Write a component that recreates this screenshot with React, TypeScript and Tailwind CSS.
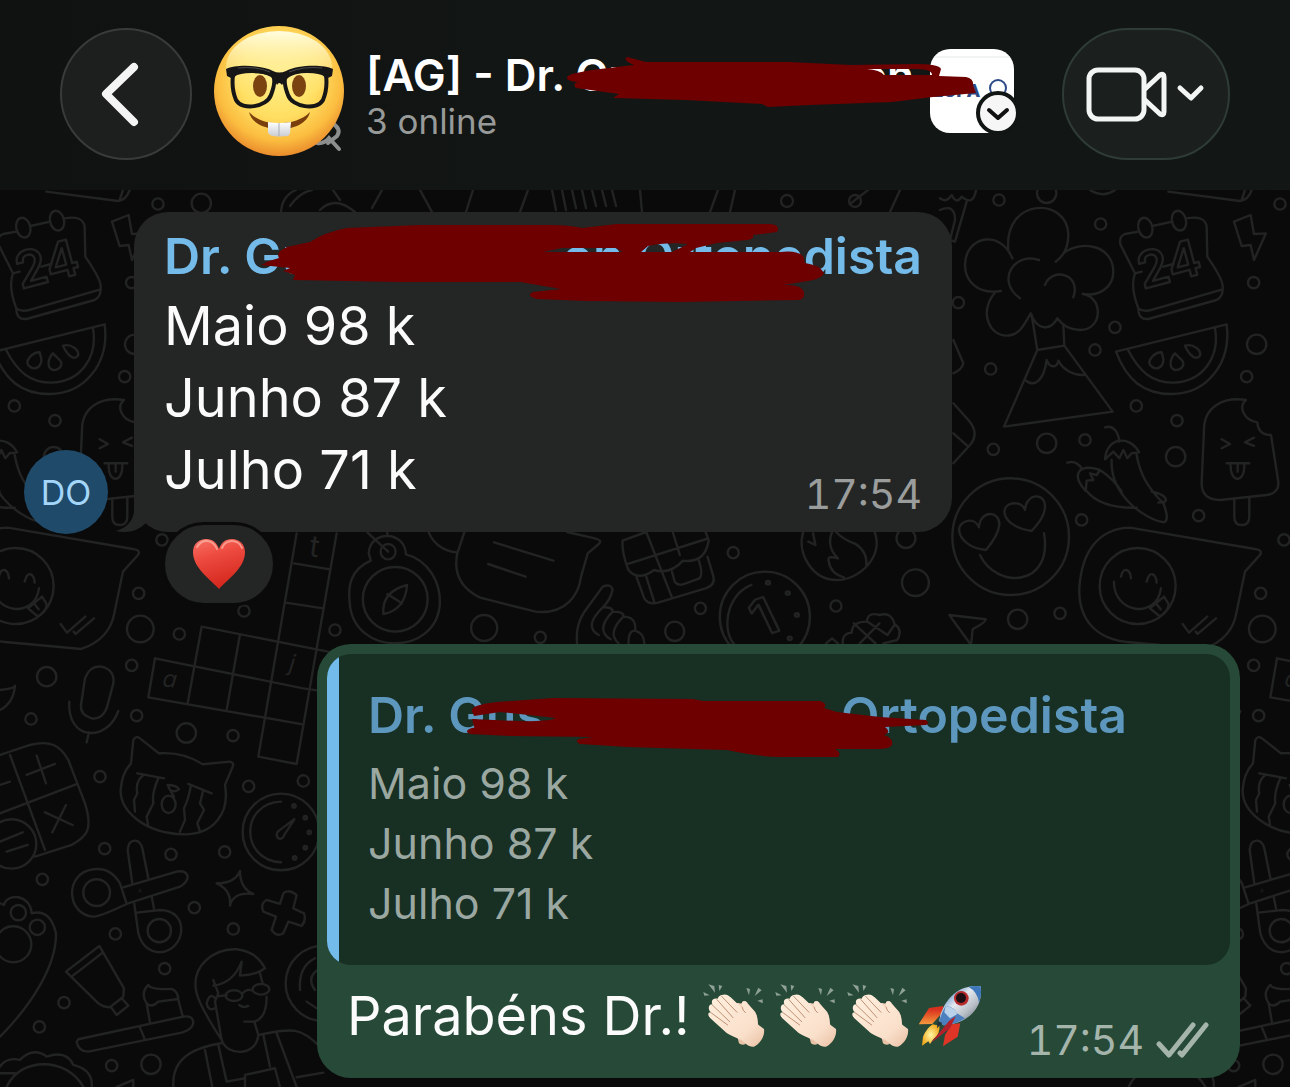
import React from 'react'

const MONTHS = ['Maio 98 k', 'Junho 87 k', 'Julho 71 k']

const Dots = ({ points, r }: { points: number[][]; r: number }) => (
  <>
    {points.map(([x, y]) => (
      <circle key={`${x}-${y}`} cx={x} cy={y} r={r} />
    ))}
  </>
)

// One horizontal tile of the doodle wallpaper, 1122px wide
const DoodleTile = () => (
  <g id="doodles">
    <g transform="translate(940 190) scale(0.3333)">
      <path d="M183 303C110 315 75 270 75 225C75 140 180 115 217 205M205 180C190 20 385 20 385 135C385 170 375 195 347 215M370 190C430 145 520 170 520 245C520 290 480 320 428 312C490 320 490 420 420 420C390 420 370 410 352 385C330 425 290 420 272 370C250 410 235 437 200 437C150 437 115 370 165 307M297 210C225 185 165 270 240 325M315 285C335 230 425 250 400 322" />
      <path d="M275 375L292 480L192 710L518 665L373 467L370 405M292 480L373 467M255 570C285 595 312 570 320 510C330 535 350 535 355 512C370 540 400 557 432 555" />
      <path d="M595 125L555 132Q535 140 542 165L585 250Q570 290 595 355Q595 390 625 387L830 330Q850 320 848 290Q850 270 802 200L800 110Q795 75 740 85M637 108L697 95M585 250L605 245M670 230L700 222M595 355Q610 368 640 358L848 298" />
      <ellipse cx="616" cy="113" rx="21" ry="30" transform="rotate(-14 616 113)" />
      <ellipse cx="717" cy="92" rx="21" ry="30" transform="rotate(-14 717 92)" />
      <text x="608" y="298" fontSize="150" fontWeight="600" transform="rotate(-15 608 298)">24</text>
      <path d="M528 485L860 403C875 520 800 612 695 612C610 612 560 570 528 485ZM563 478C600 550 640 578 700 578C790 575 840 500 825 415" />
      <path d="M665 487C640 487 620 515 632 527C650 545 672 530 670 505ZM705 490C690 505 685 535 705 540C730 540 735 520 725 510ZM735 467C760 460 785 480 780 497C770 512 750 500 735 467Z" />
      <path d="M882 95L932 75L942 132L978 130L942 210L932 165L905 168Z" />
      <path d="M918 630C850 620 792 650 792 720L785 880Q785 930 840 930L980 915Q1018 910 1015 875L993 735Q955 735 952 697C910 690 895 650 918 630M883 925V980Q883 1005 905 1005Q928 1005 928 980V922M845 748L870 762L845 775M942 743L915 757L942 768M860 820H928M872 825C870 880 915 880 913 825M893 825V845" />
      <path d="M495 712C520 705 535 725 538 755M495 808C500 740 570 735 597 787L575 790L562 805L550 780L538 805L520 785ZM515 810C510 920 620 990 672 997Q690 990 670 940C620 890 600 850 590 795M635 905C665 910 685 925 675 935L655 938M382 818C400 812 415 820 425 835M437 903C390 850 420 820 480 840L470 855L450 850L460 870L440 872ZM440 903C470 940 520 955 590 953M480 840C510 860 530 880 545 905" />
      <circle cx="212" cy="1040" r="175" />
      <path d="M138 1080C90 1075 60 1050 57 1020C57 990 105 980 117 1012C120 960 180 960 178 1005C175 1035 155 1060 138 1080ZM275 1023C220 1015 195 990 193 965C195 935 245 930 255 960C258 910 315 905 315 950C315 980 290 1005 275 1023ZM120 1095C170 1200 340 1190 312 1030" />
      <path d="M570 1013L945 1077Q970 1080 960 1095L915 1145L890 1265C880 1330 840 1360 790 1377L570 1357C470 1350 415 1290 418 1195C425 1080 480 1015 570 1013Z" />
      <circle cx="593" cy="1188" r="114" />
      <path d="M543 1160C550 1130 570 1135 573 1165M620 1175C628 1140 648 1150 650 1178M522 1175C520 1270 650 1290 663 1195M630 1255L672 1220L685 1240Q690 1260 660 1280ZM648 1240L662 1258M728 1302L747 1328L802 1280M767 1325L773 1332L828 1285" />
      <path d="M28 1275L137 1288Q140 1295 98 1318L93 1365Z" />
      <path d="M40 450L70 520Q65 540 40 550M40 640L85 690Q120 730 90 765L40 820M40 730L85 770M0 60Q45 40 45 90L30 150L45 155L80 35M0 25Q20 40 35 15Q50 45 65 20Q100 50 108 0" />
      <path d="M685 5L900 33Q925 30 935 0M905 30L915 0M450 0Q490 25 525 0" />
      <Dots r={17} points={[[177, 30], [482, 102], [55, 338], [525, 412], [465, 480], [152, 537], [589, 648], [711, 692], [435, 750], [160, 778], [425, 990], [776, 977], [360, 1270], [941, 278], [920, 560], [1020, 42], [1032, 1050], [962, 1210]]} />
      <Dots r={29} points={[[320, 10], [950, 463], [320, 760], [707, 800], [233, 1288], [1150, 40], [1133, 463]]} />
      <circle cx="967" cy="1317" r="40" />
    </g>
    <g transform="translate(0 600) scale(0.3333)">
      <path d="M255 235Q270 195 305 200Q345 210 340 250L320 325Q305 360 275 355Q240 345 243 315ZM208 305C200 420 320 430 355 333M267 397L260 427" />
      <path d="M605 80L950 148L1010 160M465 175L910 265L1010 280M445 292L908 373M605 80L563 310M465 175L445 292M720 103L680 330M890 -200L775 470L890 492L1010 -200M882 -110L990 -92M857 8L970 25" />
      <g fill="#222323" stroke="none">
        <text x="485" y="258" fontSize="70" fontStyle="italic" transform="rotate(8 485 258)">a</text>
        <text x="865" y="212" fontSize="70" fontStyle="italic" transform="rotate(8 865 212)">j</text>
        <text x="925" y="-132" fontSize="90" transform="rotate(8 925 -132)">t</text>
      </g>
      <path d="M400 420Q408 405 420 415L477 460Q550 455 608 493L690 485Q703 488 698 500L675 555C690 640 640 705 550 703C430 700 360 630 362 570Q365 520 393 490ZM412 520L492 535M565 552L635 580M430 525Q405 545 412 580L402 600L405 635M475 535Q455 580 460 610L440 650L445 680M572 560Q565 600 552 625L555 660L540 695M610 570L600 610L612 630L592 670L600 695M503 555Q530 555 537 568Q525 578 510 570ZM513 575L522 590" />
      <ellipse cx="506" cy="613" rx="21" ry="26" />
      <circle cx="843" cy="696" r="115" />
      <path d="M843 605C720 610 720 780 843 787M883 658L833 695Q825 712 840 717Q850 715 853 705Z" />
      <path d="M0 465L90 435C150 420 180 435 205 480L255 610C280 690 260 710 215 735L105 770M30 465L135 750M0 640L228 553M80 525L165 492M110 467L138 550M135 637L218 675M198 615L157 697M0 555L30 545M0 725L68 697M20 755L83 735" />
      <circle cx="35" cy="732" r="74" />
      <path d="M383 750Q385 722 405 722Q425 722 430 760L445 835M383 750L397 850M367 863L530 815Q560 810 563 830Q562 848 540 860L380 912Q300 950 280 950C200 945 190 820 280 808Q330 800 360 850L380 912M403 912L415 1000Q430 1055 480 1057C560 1050 570 930 480 930L410 938M455 890L462 925" />
      <circle cx="290" cy="878" r="40" />
      <circle cx="478" cy="992" r="35" />
      <path d="M650 850Q705 850 720 813Q720 865 760 882Q700 875 690 917Q695 870 650 850ZM790 935Q780 910 800 900L840 912L850 880Q865 865 890 885L880 925L912 940Q920 960 905 978L865 965L850 1000Q830 1012 815 990L828 950Z" />
      <path d="M198 1115L298 1038L372 1165L370 1190L330 1222Q310 1222 295 1210ZM215 1130L308 1058M332 1220L365 1195L385 1217L350 1245Z" />
      <path d="M235 1318L550 1250Q580 1245 580 1270Q575 1290 545 1298L265 1355Q235 1355 230 1325ZM420 1283L433 1315M450 1268L440 1210Q420 1180 445 1155Q450 1170 515 1167Q535 1175 535 1200L548 1248M440 1210Q455 1225 475 1205L535 1197" />
      <path d="M640 1140L655 1180L645 1205L665 1320C680 1370 770 1370 775 1305L763 1265Q800 1255 800 1190M665 1320Q600 1220 590 1180C570 1100 640 1045 710 1048Q770 1055 795 1105Q770 1125 720 1127L725 1085Q700 1150 640 1157M780 1120L788 1150M650 1190L680 1185M620 1210Q630 1175 645 1195M620 1210Q625 1235 645 1225M718 1215Q730 1225 745 1218M733 1265L763 1265" />
      <ellipse cx="702" cy="1187" rx="25" ry="16" />
      <ellipse cx="783" cy="1168" rx="25" ry="16" />
      <path d="M728 1180Q740 1165 758 1172M520 1461C515 1380 570 1345 665 1330M775 1305C880 1285 900 1280 960 1340M615 1350L637 1461M655 1335L680 1445L735 1435M790 1305L810 1400M830 1300L890 1461M735 1461L735 1425L825 1405L840 1461M890 1432L970 1418M350 1461L400 1440V1461" />
      <circle cx="970" cy="1150" r="113" />
      <path d="M900 1170Q895 1100 945 1075M950 1112Q920 1135 945 1170M920 1205L950 1225" />
      <path d="M0 1310C90 1220 170 1100 168 1000Q150 925 95 940C90 880 20 880 12 915L0 910" />
      <circle cx="40" cy="1033" r="54" />
      <path d="M0 1400Q20 1370 60 1380Q100 1340 140 1370Q200 1350 220 1395Q280 1410 275 1461M20 1461C60 1370 200 1370 250 1461M0 1420L45 1420M0 270Q45 265 45 257Q40 310 0 330" />
      <Dots r={17} points={[[732, 33], [538, 102], [395, 196], [93, 357], [410, 347], [699, 407], [300, 530], [746, 559], [910, 543], [314, 746], [513, 763], [674, 756], [127, 838], [583, 923], [346, 1002], [700, 987], [494, 1106], [192, 1208], [118, 1281], [335, 1397], [1005, 90]]} />
      <Dots r={29} points={[[140, 230], [559, 399], [453, 1393]]} />
      <Dots r={23} points={[[55, 938], [112, 982]]} />
      <Dots r={5} points={[[882, 618], [916, 653], [928, 697], [916, 743], [884, 774]]} />
      <circle cx="420" cy="872" r="1" />
    </g>
    {/* strip between the two bubbles */}
    <g transform="translate(330 520) scale(0.3953 0.3333)">
      <ellipse cx="165" cy="238" rx="82" ry="97" />
      <ellipse cx="147" cy="95" rx="19" ry="23" />
      <path d="M103 122C50 150 45 200 50 250C60 410 270 410 278 250C280 190 250 120 192 103C190 30 100 30 98 100ZM195 195Q130 215 135 282Q190 270 195 195ZM145 222L182 250M95 38L147 95M145 36V48" />
      <path d="M340 36L322 100C310 170 340 210 380 233L520 275C600 285 630 220 635 170L652 100L680 72Q690 60 670 55L600 36M415 67L565 122M400 132L495 170M250 38Q270 90 320 97" />
      <path d="M625 370Q620 310 650 265L690 200Q710 190 715 208Q710 240 690 262M690 262Q715 260 715 275M690 262Q640 320 680 345M715 275Q670 330 710 358M715 275Q745 275 742 290M742 290Q700 340 730 370M742 290Q775 290 772 330M755 370Q755 330 772 332Q795 340 795 370" />
      <path d="M800 36L740 62Q738 100 755 150Q780 185 820 150Q860 165 893 122Q950 130 958 60L950 36M750 133L952 57M800 36L865 232M867 36L885 105M775 170L795 235Q805 255 830 248L950 205Q975 195 970 170L955 110M865 155L872 185Q880 200 900 190L935 175Q945 160 932 118M800 170L820 245" />
      <ellipse cx="1100" cy="290" rx="114" ry="135" />
      <path d="M1066 195C990 230 990 370 1040 385" />
      <text x="1088" y="352" fontSize="150" fontWeight="600" transform="rotate(-22 1088 352)">1</text>
      <path d="M1197 36C1180 100 1220 180 1282 180C1340 180 1400 110 1378 36M1210 65L1228 75L1222 40M1270 36Q1255 80 1285 115Q1255 105 1262 125Q1265 160 1300 172M1280 36Q1300 60 1330 72Q1360 95 1357 138" />
      <path d="M1297 370Q1295 340 1320 338Q1320 305 1358 305Q1360 275 1390 285Q1420 275 1428 312Q1450 330 1435 360L1400 370M1325 310L1380 370M1360 305L1410 345L1428 315M1340 370L1390 310M1255 370L1270 355L1285 370" />
      <ellipse cx="390" cy="324" rx="33" ry="39" />
      <ellipse cx="872" cy="334" rx="24" ry="29" />
      <ellipse cx="1481" cy="188" rx="34" ry="40" />
      <ellipse cx="1457" cy="55" rx="24" ry="29" />
      <ellipse cx="1020" cy="98" rx="14" ry="17" />
      <ellipse cx="937" cy="265" rx="14" ry="17" />
      <ellipse cx="1280" cy="258" rx="14" ry="17" />
      <ellipse cx="532" cy="352" rx="14" ry="17" />
      <Dots r={5} points={[[1108, 188], [1158, 219], [1181, 285], [1163, 355]]} />
    </g>
    {/* strip above the first bubble */}
    <path d="M281 212Q282 196 296 190M290 206Q300 192 312 190M320 210Q335 195 355 212M333 190L340 200M382 190L372 208M420 190L432 212M466 212L473 190M520 212L528 190M552 190L556 210M562 190L566 210M572 190L576 208M582 190L586 208M592 190L596 206M602 190L606 206M612 190L616 206M640 190L642 212M710 212L718 190M730 212L735 190M850 204L868 190M890 212L900 190" />
    <Dots r={6} points={[[787, 201], [855, 201]]} />
  </g>
)

const Wallpaper = () => (
  <svg
    aria-hidden="true"
    className="pointer-events-none absolute inset-0 h-full w-full overflow-hidden font-['Inter',sans-serif] [&_*]:[vector-effect:non-scaling-stroke]"
    fill="none"
    stroke="#222323"
    strokeWidth="2.4"
    strokeLinecap="round"
    strokeLinejoin="round"
  >
    <g transform="translate(0 -190)">
      <DoodleTile />
      <use href="#doodles" x="-1122" />
      <use href="#doodles" x="1122" />
    </g>
  </svg>
)

const NerdFace = () => (
  <svg viewBox="0 0 132 138" className="h-[138px] w-[132px] shrink-0" role="img" aria-label="Group photo">
    <defs>
      <radialGradient id="face" cx="0.5" cy="0.4" r="0.6">
        <stop offset="0" stopColor="#ffee8a" />
        <stop offset="0.5" stopColor="#ffdf62" />
        <stop offset="0.8" stopColor="#fbbd40" />
        <stop offset="1" stopColor="#ea8c2c" />
      </radialGradient>
      <linearGradient id="shine" x1="0" y1="0" x2="0" y2="1">
        <stop offset="0" stopColor="#fffde0" />
        <stop offset="1" stopColor="#ffe873" stopOpacity="0" />
      </linearGradient>
      <linearGradient id="teeth" x1="0" y1="0" x2="0" y2="1">
        <stop offset="0" stopColor="#ffffff" />
        <stop offset="1" stopColor="#c9ccd2" />
      </linearGradient>
    </defs>
    <path d="M118 98Q128 104 123 111L114 118M103 118Q110 119 115 113L125 124" fill="none" stroke="#8d8e8e" strokeWidth="4" strokeLinecap="round" />
    <circle cx="65" cy="66" r="65" fill="url(#face)" />
    <ellipse cx="65" cy="42" rx="53" ry="36" fill="url(#shine)" />
    <ellipse cx="46" cy="61" rx="7" ry="11" fill="#7b4310" />
    <ellipse cx="85" cy="61" rx="7" ry="11" fill="#7b4310" />
    <path d="M35 87C48 102 82 102 96 87C91 110 40 110 35 87Z" fill="#7a3f0c" />
    <path d="M54 97Q65 99 77 97L76 108Q75 112 70 111Q65 112 60 111Q55 111 54 107Z" fill="url(#teeth)" />
    <path d="M65 98V111" stroke="#a9adb5" strokeWidth="1" />
    <path d="M19 50C28 44 50 46 57 49C62 52 60 62 57 70C53 82 28 86 22 75C19 68 18 58 19 50ZM112 50C103 44 81 46 74 49C69 52 71 62 74 70C78 82 103 86 109 75C112 68 113 58 112 50Z" fill="none" stroke="#161616" strokeWidth="4" />
    <path d="M12 44C22 39 48 40 59 46Q65 49 72 46C83 40 109 39 119 44L118 51L112 54L108 49C96 46 80 48 74 53Q70 56 68 60Q65 56 63 60Q60 54 57 52C48 47 33 46 23 49L19 54L13 51Z" fill="#161616" />
    <path d="M24 43Q42 41 56 47M75 47Q90 41 108 43" fill="none" stroke="#4b4b4b" strokeWidth="1" />
  </svg>
)

const Clap = () => (
  <svg viewBox="24 15 216 216" className="size-[72px] shrink-0" role="img" aria-label="clap">
    <defs>
      <linearGradient id="skin" x1="0" y1="0" x2="1" y2="1">
        <stop offset="0" stopColor="#fff0df" />
        <stop offset="0.7" stopColor="#fae0cb" />
        <stop offset="1" stopColor="#e9bfa3" />
      </linearGradient>
    </defs>
    <path d="M40 28L58 33L60 53ZM71 30L82 33L73 48ZM25 51L44 61L28 62ZM154 39L165 42L162 61ZM190 38L200 46L179 63ZM187 77L203 73V85Z" fill="#8fa097" />
    <path d="M125 178L132 205Q140 212 152 207L150 185Z" fill="#e8c3a8" />
    <path d="M120 85C135 80 138 92 142 80C148 76 155 78 159 86L180 110C188 122 188 140 190 153L150 140Z" fill="#f3d5bd" />
    <path
      d="M80 60C92 56 99 60 107 67L137 95L142 97C137 84 143 76 153 80C162 95 181 105 186 125L188 148L207 162C210 180 198 205 177 215C160 217 152 205 140 195C125 190 108 182 95 174L46 130C37 120 38 112 48 112C39 106 38 88 52 88C47 76 55 68 68 71C70 65 74 61 80 60Z"
      fill="url(#skin)"
    />
    <path d="M80 64L126 112M66 74L114 128M52 90L104 140M48 113L98 150M141 96Q143 107 151 113" fill="none" stroke="#bd9174" strokeWidth="3" strokeLinecap="round" />
  </svg>
)

const Rocket = () => (
  <svg viewBox="672 15 216 216" className="size-[72px] shrink-0" role="img" aria-label="rocket">
    <defs>
      <linearGradient id="hull" x1="0" y1="0" x2="1" y2="1">
        <stop offset="0.15" stopColor="#4e86c4" />
        <stop offset="0.42" stopColor="#e3e9ef" />
        <stop offset="0.65" stopColor="#b9bfc6" />
        <stop offset="1" stopColor="#4a5562" />
      </linearGradient>
      <linearGradient id="fin" x1="0" y1="0" x2="0" y2="1">
        <stop offset="0.2" stopColor="#d8321f" />
        <stop offset="1" stopColor="#f79a3b" />
      </linearGradient>
      <radialGradient id="flame">
        <stop offset="0" stopColor="#fff8a8" />
        <stop offset="1" stopColor="#f2ad22" />
      </radialGradient>
    </defs>
    <path d="M745 93L702 99L671 148L712 147L740 115Z" fill="url(#fin)" />
    <path d="M796 145L788 185L744 214L750 180L770 148Z" fill="#df3527" />
    <path d="M713 148L733 152Q737 175 715 193L705 207L700 199L681 212L684 185Q695 160 713 148Z" fill="url(#flame)" />
    <path d="M733 138C738 95 770 50 810 38Q835 30 857 34Q862 70 845 98C825 130 790 148 745 151Z" fill="url(#hull)" />
    <path d="M820 35Q840 31 857 34Q861 60 852 83Q848 50 820 35Z" fill="#3e78bb" />
    <path d="M733 138Q738 115 752 93Q778 95 786 115L810 130Q780 150 745 151Z" fill="#4c7fbe" />
    <path d="M752 93Q778 96 787 117L765 130L748 112Z" fill="#b9d2ea" />
    <circle cx="799" cy="70" r="22" fill="#b52b2b" />
    <circle cx="798" cy="69" r="15" fill="#1d0f14" />
    <path d="M782 124L762 138L708 203L765 160Z" fill="#b3202a" />
    <path d="M728 140L742 143L726 160Z" fill="#22303d" />
  </svg>
)

const Heart = () => (
  <svg viewBox="0 0 52 52" className="size-[52px]" role="img" aria-label="heart">
    <defs>
      <linearGradient id="heart" x1="0" y1="0" x2="0.3" y2="1">
        <stop offset="0" stopColor="#f77367" />
        <stop offset="0.4" stopColor="#ee4b40" />
        <stop offset="1" stopColor="#d5291f" />
      </linearGradient>
    </defs>
    <path d="M26 51C17 41 0 30 0 14C0 6 6 1 13 1C20 1 24 5 26 11C28 5 32 1 39 1C46 1 52 6 52 14C52 30 35 41 26 51Z" fill="url(#heart)" />
    <path d="M4 9Q8 2 15 3Q21 4 24 11M29 10Q32 3 39 3Q46 3 49 10" fill="none" stroke="#ffc4b8" strokeWidth="2" strokeLinecap="round" opacity="0.6" />
  </svg>
)

const Header = () => (
  <header className="relative z-10 flex min-h-[190px] items-center bg-linear-to-r from-[#101111] via-[#121715] to-[#121615] px-[60px] pb-0.5">
    <button aria-label="Back" className="flex size-[132px] shrink-0 items-center justify-center rounded-full border-2 border-[#393a3a] bg-[#1d1e1e]">
      <svg viewBox="0 0 132 132" className="size-[132px] shrink-0" fill="none" stroke="#f4f4f4" strokeWidth="8" strokeLinecap="round" strokeLinejoin="round">
        <path d="M74 39L46 66L74 94" />
      </svg>
    </button>
    <div className="ml-[22px]">
      <NerdFace />
    </div>
    <div className="relative ml-5 flex-1 pt-1">
      <h1 className="flex justify-between pr-4 text-[44px] leading-[50px] font-semibold whitespace-nowrap text-white">
        <span>[AG] - Dr. Gu</span>
        <span>on</span>
      </h1>
      <p className="text-[35px] leading-[42px] text-[#979a99]">3 online</p>
      <svg aria-hidden="true" viewBox="366 50 564 50" className="absolute top-1 right-0 z-10 h-[50px] w-[564px] overflow-visible">
        <path
          fill="#6e0000"
          d="M567 78Q566 74 592 70L625 66L634 65Q622 60 627 57L646 62L727 62L789 62L851 65L916 64Q939 64 941 69L939 76L966 77Q974 79 973 85L976 93L933 97L892 102L810 105L768 107L762 104L686 100L613 98L619 94L576 88Q572 83 578 82Q567 81 567 78ZM867 69Q880 70 884 75L932 75Q932 69 916 69Z"
          fillRule="evenodd"
        />
      </svg>
    </div>
    <div className="relative mb-1.5 size-[84px] shrink-0 rounded-[20px] bg-white">
      <svg aria-hidden="true" viewBox="0 0 84 84" className="size-[84px]" fill="none">
        <path d="M4 8H80" stroke="#e3e9e7" strokeWidth="1" />
        <circle cx="68" cy="39" r="8" stroke="#2b4a86" strokeWidth="2" />
        <text x="3" y="48" fontSize="18" fontWeight="800" fill="#2b4a86">LUPA</text>
      </svg>
      <span className="absolute -right-1.5 -bottom-0.5 flex size-[44px] items-center justify-center rounded-full border-4 border-[#111514] bg-[#f6f6f6]">
        <svg aria-hidden="true" viewBox="0 0 36 36" className="size-9 shrink-0" fill="none" stroke="#111" strokeWidth="4" strokeLinecap="round" strokeLinejoin="round">
          <path d="M9 15L18 23L27 15" />
        </svg>
      </span>
    </div>
    <button aria-label="Video call" className="ml-12 flex h-[132px] w-[168px] shrink-0 items-center justify-center rounded-full border-2 border-[#2f3b37] bg-[#1b201f]">
      <svg viewBox="0 0 168 132" className="h-[132px] w-[168px] shrink-0" fill="none" stroke="#f2f5f3" strokeWidth="5" strokeLinecap="round" strokeLinejoin="round">
        <rect x="27" y="42" width="55" height="49" rx="9" />
        <path d="M83 61L98 47Q102 45 102 49V84Q102 88 98 86L83 72" />
        <path d="M118 60L129 70L139 60" />
      </svg>
    </button>
  </header>
)

const ReceivedMessage = () => (
  <article className="flex items-end pt-[22px] pl-6">
    <div className="-mb-0.5 flex size-[84px] shrink-0 items-center justify-center rounded-full bg-[#204a69] text-[34px] text-[#a4d6fa]">DO</div>
    <div className="relative ml-[26px] rounded-[34px] bg-[#232625] px-[30px] pt-3.5 pb-3.5">
      <svg aria-hidden="true" viewBox="0 0 40 40" className="absolute bottom-0 -left-[18px] size-10" fill="#232625">
        <path d="M18 0V20Q16 34 0 39Q18 43 30 31L40 20Z" />
      </svg>
      <h2 className="relative mb-1 flex w-[758px] justify-between text-[50px] leading-[60px] font-semibold whitespace-nowrap text-[#74bbea]">
        <span>Dr. Gu</span>
        <span>on Ortopedista</span>
        <svg aria-hidden="true" viewBox="164 226 758 60" className="absolute top-0 left-0 h-[60px] w-[758px] overflow-visible">
          <path
            fill="#6e0000"
            fillRule="evenodd"
            d="M261 265Q270 260 279 258Q275 252 287 247L310 242Q325 232 347 228L420 225H550Q570 225 582 228L617 224H770Q781 225 777 232L753 235Q755 239 747 240L717 243L696 248L690 252H780Q797 250 803 256L805 263Q820 265 824 273Q822 279 808 281L783 285Q803 284 804 293Q805 300 797 300L680 302L587 301L537 299Q525 296 533 292L561 289L520 282H400L293 280L295 275L283 271L290 268ZM543 252L562 248H616L623 252ZM641 252L648 246Q665 242 688 244L672 252Z"
          />
        </svg>
      </h2>
      <div className="flex items-end justify-between">
        <div className="pb-3 text-[54px] leading-[72px] text-[#fbfbfb]">
          {MONTHS.map((line) => (
            <p key={line}>{line}</p>
          ))}
        </div>
        <time className="text-[41px] leading-[48px] text-[#9b9d9c] tabular-nums">17:54</time>
      </div>
    </div>
  </article>
)

const SentMessage = () => (
  <article className="mt-[38px] mr-[50px] ml-auto w-[923px] rounded-[34px] bg-[#274a38] px-2.5 pt-2.5 pb-3.5">
    <blockquote className="flex overflow-hidden rounded-3xl bg-[#182f24]">
      <div className="w-3 shrink-0 bg-[#73bbea]" />
      <div className="pt-[31px] pb-8 pl-[29px]">
        <h2 className="relative mb-2 flex w-[759px] justify-between text-[50px] leading-[60px] font-semibold whitespace-nowrap text-[#5d97bd]">
          <span>Dr. Gus</span>
          <span>on Ortopedista</span>
          <svg aria-hidden="true" viewBox="368 685 759 60" className="absolute top-0 left-0 h-[60px] w-[759px] overflow-visible">
            <path
              fill="#6e0000"
              d="M472 711Q470 705 497 702L553 698L693 699L703 701H820Q828 704 824 708L837 712L880 717L926 720Q930 723 926 725L885 727Q892 732 884 735Q894 738 892 745Q890 749 878 749L835 749Q842 753 838 757H780Q760 757 727 750L627 747L580 744Q574 741 579 739L593 737L510 736L470 734Q463 731 472 728L507 723L550 720L556 718L500 712L474 716Z"
            />
            <path fill="#6e0000" d="M472 719L540 722L560 730H475Z" />
          </svg>
        </h2>
        <div className="text-[43px] leading-[60px] text-[#9ba8a1]">
          {MONTHS.map((line) => (
            <p key={line}>{line}</p>
          ))}
        </div>
      </div>
    </blockquote>
    <div className="flex items-end justify-between pt-[15px] pr-5 pl-5">
      <div className="mb-3 flex items-center">
        <p className="w-[356px] text-[54px] leading-[72px] whitespace-nowrap text-[#fbfbfb]">Parabéns Dr.!</p>
        <Clap />
        <Clap />
        <Clap />
        <Rocket />
      </div>
      <div className="flex items-center gap-3">
        <time className="text-[41px] leading-[48px] text-[#a5b5ac] tabular-nums">17:54</time>
        <svg viewBox="0 0 54 36" className="h-9 w-[54px]" role="img" aria-label="Delivered" fill="none" stroke="#a5b5ac" strokeWidth="5" strokeLinecap="round" strokeLinejoin="round">
          <path d="M3 22L13 33L37 3M24 31L26 33L50 3" />
        </svg>
      </div>
    </div>
  </article>
)

const App = () => {
  return (
    <div className="flex min-h-screen flex-col bg-[#0a0a0a] font-['Inter','Liberation_Sans',sans-serif]">
      <Header />
      <main className="relative flex-1 overflow-hidden pb-[9px]">
        <Wallpaper />
        <div className="relative flex flex-col">
          <ReceivedMessage />
          <button aria-label="Reaction" className="relative -mt-2.5 ml-[162px] flex h-[84px] w-[114px] items-center justify-center rounded-full border-[3px] border-[#0a0a0a] bg-[#232625]">
            <Heart />
          </button>
          <SentMessage />
        </div>
      </main>
    </div>
  )
}

export default App
